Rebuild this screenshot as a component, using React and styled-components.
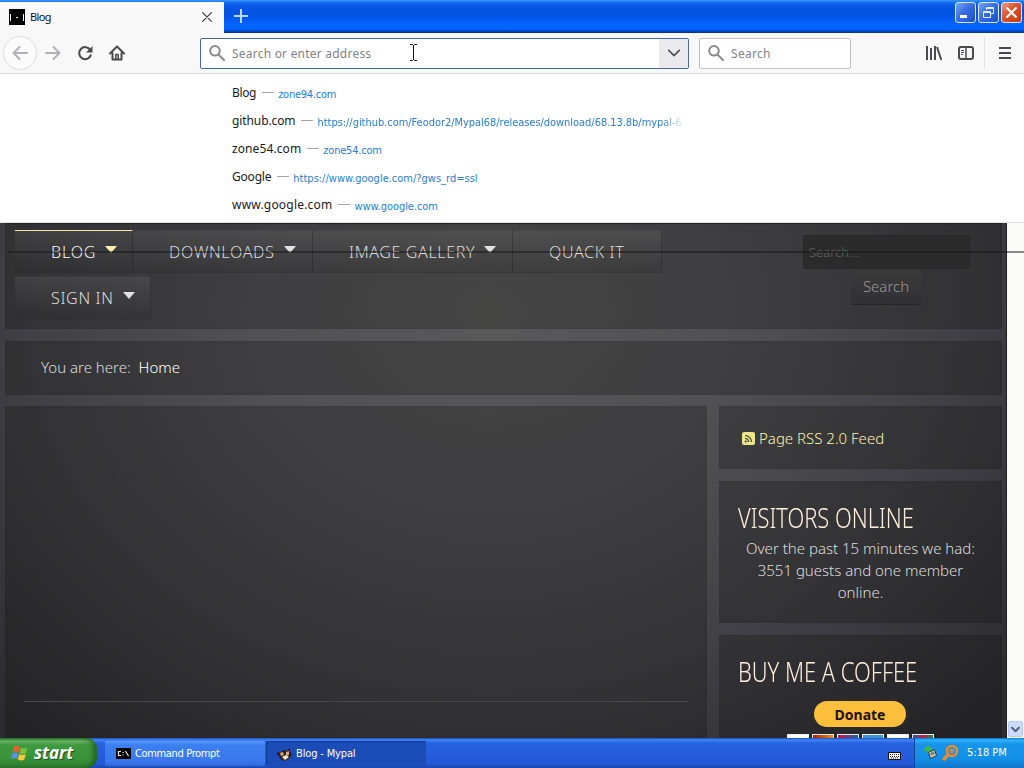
import React from "react";
import styled, { createGlobalStyle, css } from "styled-components";

const GlobalStyle = createGlobalStyle`
    *{
        box-sizing: border-box;
    }
    body{
        margin: 0;
        width: 1024px;
        height: 768px;
        overflow: hidden;
        background: #fff;
        font-family: "Noto Sans", sans-serif;
    }
    svg{
        display: block;
        flex: none;
    }
`;

const Screen = styled.div`
    display: flex;
    flex-direction: column;
    width: 1024px;
    height: 768px;
    overflow: hidden;
`;

const Label = styled.span`
    white-space: nowrap;
    letter-spacing: ${props => props.$ls || 0}px;
`;

/* ---------- title bar ---------- */

const TitleBar = styled.div`
    display: flex;
    flex: 0 0 33px;
    background: linear-gradient(#3f97fb 0, #1674f2 2px, #0a5be8 5px, #0453e0 11px, #0255ea 17px, #0262fb 23px, #0263ff 29px, #0149c8 31px, #06318f 33px);
`;

const Tab = styled.div`
    display: flex;
    align-items: center;
    width: 224px;
    margin-top: 2px;
    padding: 0 12px 2px 9px;
    background: #f9f9fa;
    font-size: 11px;
    color: #111;
    svg:last-child{
        margin-left: auto;
    }
`;

const TabName = styled(Label)`
    margin-left: 5px;
`;

const NewTab = styled.div`
    flex: 1;
    padding: 8px 0 0 9px;
`;

const WindowButtons = styled.div`
    display: flex;
    gap: 2px;
    padding: 2px 2px 0 0;
`;

const WindowButton = styled.div`
    width: 21px;
    height: 21px;
    border: 1px solid #dbe7fb;
    border-radius: 3px;
    background: ${props => props.$close
        ? "linear-gradient(135deg, #eb9a80, #dd5228 45%, #c23a12)"
        : "linear-gradient(135deg, #7ba2f2, #3a6ee2 45%, #1e50c8)"};
`;

/* ---------- navigation bar ---------- */

const NavBar = styled.div`
    display: flex;
    align-items: center;
    flex: 0 0 41px;
    background: #f8f8f9;
    border-bottom: 1px solid #dcdcde;
`;

const NavButtons = styled.div`
    display: flex;
    align-items: center;
    width: 200px;
    padding-left: 3px;
`;

const BackButton = styled.div`
    display: flex;
    align-items: center;
    justify-content: center;
    width: 34px;
    height: 34px;
    margin-right: 8px;
    border: 1px solid #dededf;
    border-radius: 50%;
    background: #fbfbfb;
`;

const NavIcon = styled.div`
    width: 16px;
    margin-right: 16px;
`;

const Field = styled.div`
    display: flex;
    align-items: center;
    width: ${props => props.$width}px;
    height: 31px;
    padding-left: 8px;
    border: 1px solid ${props => props.$active ? "#46699c" : "#c2c0c4"};
    border-radius: 2px;
    background: #fff;
    font-size: 12px;
    color: #828284;
    ${Label}{
        margin-left: 7px;
    }
`;

const FieldArrow = styled.div`
    display: flex;
    align-items: center;
    justify-content: center;
    width: 29px;
    height: 29px;
    margin-left: auto;
    background: #e9e9ee;
`;

const NavRight = styled.div`
    display: flex;
    align-items: center;
    margin-left: auto;
    padding-right: 11px;
`;

const NavSeparator = styled.div`
    width: 1px;
    height: 32px;
    margin: 0 12px 0 10px;
    background: #e2e2e4;
`;

/* ---------- address suggestions ---------- */

const Suggestions = styled.div`
    flex: 0 0 149px;
    padding: 5px 0 0 232px;
    background: #fff;
    border-bottom: 1px solid #e4e4e4;
`;

const Suggestion = styled.div`
    display: flex;
    align-items: center;
    height: 28px;
    font-size: 12px;
    color: #1a1a1c;
    ${Label}:first-child{
        padding-bottom: 1px;
    }
`;

const Dash = styled.div`
    flex: 0 0 12px;
    height: 1px;
    margin: 0 4px 1px 6px;
    background: #a5a5a8;
`;

const Url = styled(Label)`
    padding-top: 2px;
    font-family: "DejaVu Sans Condensed", "DejaVu Sans", sans-serif;
    font-stretch: condensed;
    font-size: 11px;
    color: #2a7cce;
    ${props => props.$fade && css`
        mask-image: linear-gradient(90deg, #000 345px, transparent 368px);
    `}
`;

/* ---------- web page ---------- */

const Viewport = styled.div`
    position: relative;
    display: flex;
    height: 515px;
`;

const TearLine = styled.div`
    position: absolute;
    left: 8px;
    right: 0;
    top: 28px;
    height: 2px;
    background: rgba(20, 20, 20, 0.5);
`;

const Page = styled.div`
    display: flex;
    flex-direction: column;
    width: 1007px;
    padding: 0 4px 0 5px;
    border-right: 1px solid #1f1f20;
    background: radial-gradient(ellipse 680px 560px at 490px 90px, #59595a, #515054 35%, #414046 68%, #2d2c31 100%);
`;

const Panel = styled.div`
    background: rgba(14, 14, 12, 0.27);
    box-shadow: inset 0 0 2px rgba(0, 0, 0, 0.12);
`;

const Header = styled(Panel)`
    display: flex;
    justify-content: space-between;
    height: 107px;
    padding: 6px 0 0 10px;
    border-top: 1px solid #222;
`;

const Menu = styled.div`
    display: flex;
    flex-wrap: wrap;
    align-content: flex-start;
    width: 720px;
    row-gap: 3px;
`;

const MenuItem = styled.div`
    display: flex;
    width: ${props => props.$width}px;
    height: 43px;
    padding: 9px 0 0 36px;
    border-top: 1px solid ${props => props.$active ? "#f1e9a8" : "rgba(255, 255, 255, 0.06)"};
    border-right: 1px solid rgba(20, 20, 20, 0.3);
    border-bottom: 1px solid rgba(20, 20, 20, 0.4);
    background: linear-gradient(rgba(255, 255, 255, 0.07), rgba(0, 0, 0, 0.08));
    font-size: 16px;
    line-height: 24px;
    font-weight: 300;
    color: ${props => props.$active ? "#fbfaf0" : "#dedede"};
`;

const Caret = styled.i`
    width: 0;
    height: 0;
    margin: 6px 0 0 9px;
    border: 6px solid transparent;
    border-top: 7px solid ${props => props.$active ? "#f8f1a9" : "#e2e2e2"};
    border-bottom: 0;
`;

const SiteSearch = styled.div`
    width: 199px;
    padding-top: 5px;
`;

const SiteInput = styled.div`
    width: 167px;
    height: 34px;
    padding: 7px 5px;
    border: 1px solid #282828;
    border-radius: 2px;
    background: #2b2b2b;
    font-size: 13px;
    line-height: 18px;
    font-weight: 300;
    color: #666;
`;

const SiteButton = styled.div`
    width: 70px;
    height: 35px;
    margin: 1px 0 0 48px;
    padding-top: 6px;
    border-bottom: 1px solid #262626;
    background: linear-gradient(#3b3b3b, #303033);
    font-size: 15px;
    line-height: 20px;
    font-weight: 300;
    text-align: center;
    color: #999;
`;

const Breadcrumb = styled(Panel)`
    display: flex;
    flex: 0 0 54px;
    margin: 12px 0 11px;
    padding-left: 36px;
    font-size: 15px;
    line-height: 52px;
    font-weight: 300;
    color: #ddd;
    b{
        margin-left: 8px;
        font-weight: 300;
        color: #fff;
    }
`;

const Columns = styled.div`
    display: flex;
    flex: 1;
    gap: 12px;
`;

const Article = styled(Panel)`
    width: 702px;
    padding: 295px 19px 0;
`;

const Rule = styled.div`
    height: 1px;
    background: #48484a;
`;

const Sidebar = styled.div`
    display: flex;
    flex-direction: column;
    gap: 12px;
    width: 283px;
`;

const Widget = styled(Panel)`
    height: ${props => props.$height}px;
    padding: ${props => props.$top}px 19px 0;
    overflow: hidden;
    font-size: 15px;
    line-height: 22px;
    font-weight: 300;
    text-align: center;
    color: #ddd;
`;

const Feed = styled.div`
    display: flex;
    align-items: center;
    padding-left: 4px;
    gap: 4px;
    font-weight: 300;
    color: #fbf4ae;
`;

const WidgetTitle = styled.div`
    height: 36px;
    font-size: 27px;
    line-height: 34px;
    font-weight: 300;
    text-align: left;
    white-space: nowrap;
    color: #ffeedb;
    transform: scaleX(0.81);
    transform-origin: left;
`;

const Donate = styled.div`
    width: 92px;
    height: 26px;
    margin: 10px auto 0 76px;
    border-radius: 13px;
    background: #fdbf3b;
    font-size: 14px;
    line-height: 27px;
    font-weight: 700;
    color: #1d1010;
`;

const Cards = styled.div`
    display: flex;
    gap: 3px;
    margin: 7px 0 0 49px;
`;

const Card = styled.div`
    width: 22px;
    height: 12px;
    border: 1px solid #eee;
    background: ${props => props.$fill};
`;

const Scrollbar = styled.div`
    display: flex;
    align-items: flex-end;
    flex: 1;
    background: #fafaf6;
`;

const ScrollDown = styled.div`
    display: flex;
    align-items: center;
    justify-content: center;
    width: 15px;
    height: 16px;
    margin: 0 0 1px 1px;
    border: 1px solid #b4c8f6;
    border-radius: 2px;
    background: #cbdafd;
`;

/* ---------- taskbar ---------- */

const Taskbar = styled.div`
    display: flex;
    flex: 0 0 30px;
    background: linear-gradient(#1d4fc0 0, #3f86f2 2px, #2862e0 5px, #245bdb 20px, #2259d6 26px, #1b46ad 30px);
    font-family: "DejaVu Sans Condensed", "DejaVu Sans", sans-serif;
    font-stretch: condensed;
    font-size: 11px;
    color: #fff;
`;

const Start = styled.div`
    display: flex;
    align-items: center;
    width: 97px;
    padding: 0 0 1px 11px;
    border-radius: 0 10px 10px 0;
    background: linear-gradient(#2c7a2c 0, #6db76a 3px, #3f9a3e 7px, #38933a 20px, #2f8030 30px);
    box-shadow: inset -4px 0 5px rgba(20, 70, 20, 0.6);
    font-family: "Noto Sans", sans-serif;
    font-size: 17px;
    font-weight: 700;
    font-style: italic;
    text-shadow: 1px 1px 1px #1c4a1c;
    ${Label}{
        margin-left: 5px;
    }
`;

const Task = styled.div`
    display: flex;
    align-items: center;
    width: 160px;
    height: 25px;
    margin-top: 3px;
    margin-left: ${props => props.$active ? 1 : 8}px;
    padding-left: 11px;
    gap: 4px;
    border-radius: 2px;
    background: ${props => props.$active ? "#1c4cb8" : "linear-gradient(#5a9afa, #3c7ff0 4px, #3978ee 20px, #3068d8)"};
    box-shadow: ${props => props.$active ? "inset 1px 1px 1px #123a90" : "none"};
`;

const Keyboard = styled.div`
    margin: 13px 13px 0 auto;
`;

const Tray = styled.div`
    display: flex;
    align-items: center;
    width: 110px;
    padding: 0 0 1px 9px;
    border-left: 1px solid #0c4a9e;
    background: linear-gradient(#0f70d0 0, #2cb4f8 2px, #1895ea 6px, #1290e8 20px, #0f76ca 30px);
    ${Label}{
        margin-left: 8px;
    }
`;

const suggestions = [
    { title: "Blog", url: "zone94.com", ls: -0.35, urlLs: -0.25 },
    { title: "github.com", url: "https://github.com/Feodor2/Mypal68/releases/download/68.13.8b/mypal-6", ls: -0.1, urlLs: -0.04, fade: true },
    { title: "zone54.com", url: "zone54.com", ls: 0.1, urlLs: -0.2 },
    { title: "Google", url: "https://www.google.com/?gws_rd=ssl", ls: -0.2 },
    { title: "www.google.com", url: "www.google.com", ls: 0.2, urlLs: -0.05 },
];

const menu = [
    { name: "BLOG", width: 118, caret: true, active: true, ls: 0.8 },
    { name: "DOWNLOADS", width: 180, caret: true, ls: 0.7 },
    { name: "IMAGE GALLERY", width: 200, caret: true, ls: 0.65 },
    { name: "QUACK IT", width: 149, ls: 0.65 },
    { name: "SIGN IN", width: 136, caret: true, ls: 0.7 },
];

const cards = [
    "#fff",
    "linear-gradient(90deg, #a51c10, #f08a1c)",
    "linear-gradient(90deg, #c8143c, #1763b4)",
    "#3e93d4",
    "#fff",
    "linear-gradient(90deg, #1a5b9c, #c02040, #188a50)",
];

function Stroke({ size = 16, color = "#4a4a4d", width = 2, d }){
    return(
        <svg width={size} height={size} viewBox="0 0 16 16" fill="none" stroke={color} strokeWidth={width} strokeLinecap="round" strokeLinejoin="round">
            <path d={d}/>
        </svg>
    );
}

function Magnifier(){
    return <Stroke color="#8b8b8e" d="M6 1a4.8 4.8 0 1 1 0 9.6A4.8 4.8 0 0 1 6 1zM9.7 9.7l5.3 5.3"/>;
}

function BrowserChrome(){
    return(
        <>
            <TitleBar>
                <Tab>
                    <svg width="16" height="16"><path fill="#000" d="M0 0h16v16H0z"/><path stroke="#fff" d="M1.5 5v7M14.5 5v7M7 8.5h2"/></svg>
                    <TabName $ls={-0.6}>Blog</TabName>
                    <Stroke size={10} color="#3c3c3f" width={2} d="M1 1l14 14M15 1L1 15"/>
                </Tab>
                <NewTab>
                    <svg width="16" height="16" stroke="#b8dcff" strokeWidth="2"><path d="M8 1v14M1 8h14"/></svg>
                </NewTab>
                <WindowButtons>
                    <WindowButton><svg width="19" height="19"><path fill="#fff" d="M4 12h7v3H4z"/></svg></WindowButton>
                    <WindowButton><svg width="19" height="19" fill="none" stroke="#e4ecff"><path d="M7.5 7V4.5h7v6H12M7 5.5h8M4.5 8.5h7v6h-7zM4 9.5h8"/></svg></WindowButton>
                    <WindowButton $close><svg width="19" height="19" stroke="#fff" strokeWidth="2.2"><path d="M4.500 4.500l10 10M14.500 4.500l-10 10"/></svg></WindowButton>
                </WindowButtons>
            </TitleBar>
            <NavBar>
                <NavButtons>
                    <BackButton><Stroke color="#b2b2b5" d="M15 8H1.500M7.500 2L1.500 8l6 6"/></BackButton>
                    <NavIcon><Stroke color="#b2b2b5" d="M1 8h13.500M8.500 2l6 6-6 6"/></NavIcon>
                    <NavIcon>
                        <svg width="16" height="16" fill="none" stroke="#4a4a4d" strokeWidth="2"><path d="M13.300 5A6 6 0 1 0 14 9.500"/><path fill="#4a4a4d" stroke="none" d="M15.500 1v6.500H9z"/></svg>
                    </NavIcon>
                    <NavIcon>
                        <svg width="16" height="16" fill="none" stroke="#4a4a4d" strokeWidth="2" strokeLinejoin="round" strokeLinecap="round"><path d="M1 8.500L8 1.500l7 7M3.500 8v6.500h9V8"/><path strokeWidth="1.500" d="M6.800 14V9.500h2.400V14"/></svg>
                    </NavIcon>
                </NavButtons>
                <Field $width={489} $active>
                    <Magnifier/>
                    <Label $ls={0.22}>Search or enter address</Label>
                    <FieldArrow><Stroke size={12} width={2.4} color="#55555a" d="M1 4.500l7 7 7-7"/></FieldArrow>
                </Field>
                <Field $width={152} style={{ marginLeft: 10 }}>
                    <Magnifier/>
                    <Label $ls={0.3}>Search</Label>
                </Field>
                <NavRight>
                    <svg width="16" height="16" stroke="#4a4a4d" strokeWidth="2"><path d="M1 1v14M5 3v12M9 1v14"/><path d="M11 2l4.300 13"/></svg>
                    <NavIcon style={{ margin: "0 0 0 16px" }}>
                        <svg width="16" height="16" fill="none" stroke="#4a4a4d"><rect x="1" y="2" width="14" height="12" rx="2" strokeWidth="2"/><path d="M8 2v12" strokeWidth="1.500"/><path d="M3 5.500h3M3 7.500h3M3 9.500h2"/></svg>
                    </NavIcon>
                    <NavSeparator/>
                    <svg width="16" height="16" stroke="#4a4a4d" strokeWidth="2"><path d="M2 3h12M2 8h12M2 13h12"/></svg>
                </NavRight>
            </NavBar>
            <Suggestions>
                {suggestions.map(({title, url, fade, ls, urlLs}) =>
                    <Suggestion key={title}><Label $ls={ls}>{title}</Label><Dash/><Url $fade={fade} $ls={urlLs}>{url}</Url></Suggestion>
                )}
            </Suggestions>
        </>
    );
}

function WebPage(){
    return(
        <Viewport>
            <Page>
                <Header>
                    <Menu>
                        {menu.map(({name, width, caret, active, ls}) =>
                            <MenuItem key={name} $width={width} $active={active}>
                                <Label $ls={ls}>{name}</Label>
                                {caret && <Caret $active={active}/>}
                            </MenuItem>
                        )}
                    </Menu>
                    <SiteSearch>
                        <SiteInput>Search...</SiteInput>
                        <SiteButton>Search</SiteButton>
                    </SiteSearch>
                </Header>
                <Breadcrumb>You are here: <b>Home</b></Breadcrumb>
                <Columns>
                    <Article><Rule/></Article>
                    <Sidebar>
                        <Widget $height={63} $top={21}>
                            <Feed>
                                <svg width="13" height="13"><rect width="13" height="13" rx="2" fill="#eee58c"/><g fill="none" stroke="#3a3a30" strokeWidth="1.200"><path d="M3 6.500A3.500 3.500 0 0 1 6.500 10M3 3.500A6.500 6.500 0 0 1 9.500 10"/></g><circle cx="3.700" cy="9.500" r="1" fill="#3a3a30"/></svg>
                                <Label>Page RSS 2.0 Feed</Label>
                            </Feed>
                        </Widget>
                        <Widget $height={142} $top={20}>
                            <WidgetTitle>VISITORS ONLINE</WidgetTitle>
                            Over the past 15 minutes we had:<br/>3551 guests and one member<br/>online.
                        </Widget>
                        <Widget $height={103} $top={20}>
                            <WidgetTitle>BUY ME A COFFEE</WidgetTitle>
                            <Donate>Donate</Donate>
                            <Cards>{cards.map((fill, i) => <Card key={i} $fill={fill}/>)}</Cards>
                        </Widget>
                    </Sidebar>
                </Columns>
            </Page>
            <Scrollbar>
                <ScrollDown><Stroke size={9} width={3.500} color="#4d6185" d="M2 5l6 6 6-6"/></ScrollDown>
            </Scrollbar>
            <TearLine/>
        </Viewport>
    );
}

function TaskbarRow(){
    return(
        <Taskbar>
            <Start>
                <svg width="18" height="18">
                    <path fill="#e9622c" d="M3 3q3-2 6 0L7.500 8.500q-3-2-6 0z"/>
                    <path fill="#7cc142" d="M10 3.500q3 2 6.500 0L15 9q-3 2-6.500 0z"/>
                    <path fill="#5a8ff0" d="M1.300 9.500q3-2 6 0L6 15q-3-2-6 0z"/>
                    <path fill="#fbc934" d="M8.300 10q3 2 6.500 0l-1.500 5.500q-3 2-6.500 0z"/>
                </svg>
                <Label>start</Label>
            </Start>
            <Task>
                <svg width="15" height="11"><path fill="#000" d="M0 0h15v11H0z"/><path stroke="#e8e8e8" strokeWidth="1.200" fill="none" d="M5 3.500H2.500v4H5M7 4v1M7 6.500v1M9.500 3l3 5"/></svg>
                <Label $ls={-0.35}>Command Prompt</Label>
            </Task>
            <Task $active>
                <svg width="15" height="14"><path fill="#2a2018" d="M0 5l3 1 3-3 3 1 4-3v4l2 2-2 4-5 3-5-2-1-3-2-1z"/><path fill="#d9a878" d="M3 6l3-1 1 3-3 1zM9 5l3-1v4l-3 1z"/><path fill="#f3e6d4" d="M5 10l4-2 3 2-4 3z"/></svg>
                <Label $ls={-0.15}>Blog - Mypal</Label>
            </Task>
            <Keyboard>
                <svg width="13" height="9"><path fill="#f4f4f0" stroke="#111" d="M.5 1.500h12v7H.5z"/><path stroke="#222" strokeDasharray="1 1" d="M2 3.500h9M2 5.500h9M3 7h7"/></svg>
            </Keyboard>
            <Tray>
                <svg width="14" height="15"><path fill="#44b83c" d="M0 4l5-4v2l3 2-4 4-1-2H0z"/><path fill="#d8dcd0" stroke="#333" d="M4.500 7.500l6-3 2 6-6 3z"/><path fill="#7a8a70" d="M6 8l4-2 1 3-4 2z"/></svg>
                <svg width="17" height="16" style={{ marginLeft: 4 }} fill="none" stroke="#f08a24"><circle cx="10" cy="6" r="5" strokeWidth="2.500"/><circle cx="10" cy="6" r="1.500" strokeWidth="1.500"/><path strokeWidth="3.500" d="M6 10l-5 5"/></svg>
                <Label>5:18 PM</Label>
            </Tray>
        </Taskbar>
    );
}

const TextCursor = styled.svg`
    position: absolute;
    left: 409px;
    top: 44px;
`;

export default function App(){
    return(
        <Screen>
            <GlobalStyle/>
            <BrowserChrome/>
            <WebPage/>
            <TaskbarRow/>
            <TextCursor width="9" height="17" fill="none" stroke="#111"><path d="M1 .5h2.500l1 1 1-1H8M4.500 1v15M1 16.500h2.500l1-1 1 1H8"/></TextCursor>
        </Screen>
    );
}
